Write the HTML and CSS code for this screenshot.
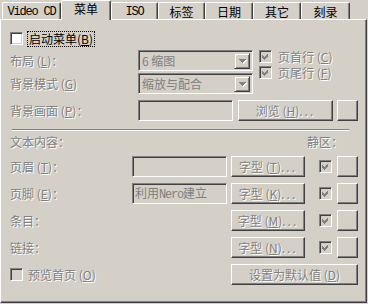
FILE: index.html
```html
<!DOCTYPE html>
<html lang="zh-CN">
<head>
    <meta charset="UTF-8">
    <title>菜单</title>
    <link rel="stylesheet" href="styles.css">
</head>
<body>
    <div class="dialog">
        <div class="tabs">
            <div class="tab tab-vcd"><span class="latin">Video CD</span></div>
            <div class="tab tab-active">菜单</div>
            <div class="tab"><span class="latin">ISO</span></div>
            <div class="tab">标签</div>
            <div class="tab tab-wide">日期</div>
            <div class="tab tab-wide">其它</div>
            <div class="tab tab-wider">刻录</div>
        </div>

        <div class="panel">
            <div class="row-enable">
                <span class="check check-on"></span>
                <span class="focus">启动菜单(<u>B</u>)</span>
            </div>

            <div class="layout">
                <span class="dis">布局 (<u>L</u>)：</span>
                <div class="select">
                    <span class="select-text dis-plain">6 缩图</span>
                    <span class="select-arrow"><svg width="7" height="4" viewBox="0 0 7 4" shape-rendering="crispEdges"><polygon points="0,0 7,0 3.5,4" fill="#808080"/></svg></span>
                </div>
                <div class="options">
                    <div class="opt">
                        <span class="check"><svg width="7" height="7" viewBox="0 0 7 7" shape-rendering="crispEdges"><polygon points="0,2 2,4 6,0 6,3 2,7 0,5" fill="#808080"/></svg></span>
                        <span class="dis opt-text">页首行 (<u>C</u>)</span>
                    </div>
                    <div class="opt">
                        <span class="check"><svg width="7" height="7" viewBox="0 0 7 7" shape-rendering="crispEdges"><polygon points="0,2 2,4 6,0 6,3 2,7 0,5" fill="#808080"/></svg></span>
                        <span class="dis opt-text">页尾行 (<u>F</u>)</span>
                    </div>
                </div>
                <span class="dis">背景模式 (<u>G</u>)</span>
                <div class="select">
                    <span class="select-text dis-plain">缩放与配合</span>
                    <span class="select-arrow"><svg width="7" height="4" viewBox="0 0 7 4" shape-rendering="crispEdges"><polygon points="0,0 7,0 3.5,4" fill="#808080"/></svg></span>
                </div>
            </div>

            <div class="row-bg">
                <span class="dis label-bg">背景画面 (<u>P</u>)：</span>
                <div class="textbox"></div>
                <div class="btn btn-browse"><span class="dis">浏览 (<u>H</u>)<span class="dots">...</span></span></div>
                <div class="btn btn-square"></div>
            </div>

            <div class="sep"></div>

            <div class="row-head">
                <span class="dis">文本内容：</span>
                <span class="dis quiet">静区：</span>
            </div>

            <div class="field-row">
                <span class="dis label-field">页眉 (<u>T</u>)：</span>
                <div class="textbox textbox-small"></div>
                <div class="btn btn-font"><span class="dis">字型 (<u>T</u>)<span class="dots">...</span></span></div>
                <span class="check row-check"><svg width="7" height="7" viewBox="0 0 7 7" shape-rendering="crispEdges"><polygon points="0,2 2,4 6,0 6,3 2,7 0,5" fill="#808080"/></svg></span>
                <div class="btn btn-square"></div>
            </div>

            <div class="field-row">
                <span class="dis label-field">页脚 (<u>E</u>)：</span>
                <div class="textbox textbox-small"><span class="dis-plain">利用<span class="latin">Nero</span>建立</span></div>
                <div class="btn btn-font"><span class="dis">字型 (<u>K</u>)<span class="dots">...</span></span></div>
                <span class="check row-check"><svg width="7" height="7" viewBox="0 0 7 7" shape-rendering="crispEdges"><polygon points="0,2 2,4 6,0 6,3 2,7 0,5" fill="#808080"/></svg></span>
                <div class="btn btn-square"></div>
            </div>

            <div class="field-row">
                <span class="dis label-field">条目：</span>
                <div class="blank"></div>
                <div class="btn btn-font"><span class="dis">字型 (<u>M</u>)<span class="dots">...</span></span></div>
                <span class="check row-check"><svg width="7" height="7" viewBox="0 0 7 7" shape-rendering="crispEdges"><polygon points="0,2 2,4 6,0 6,3 2,7 0,5" fill="#808080"/></svg></span>
                <div class="btn btn-square"></div>
            </div>

            <div class="field-row">
                <span class="dis label-field">链接：</span>
                <div class="blank"></div>
                <div class="btn btn-font"><span class="dis">字型 (<u>N</u>)<span class="dots">...</span></span></div>
                <span class="check row-check"><svg width="7" height="7" viewBox="0 0 7 7" shape-rendering="crispEdges"><polygon points="0,2 2,4 6,0 6,3 2,7 0,5" fill="#808080"/></svg></span>
                <div class="btn btn-square"></div>
            </div>

            <div class="field-row">
                <span class="check"></span>
                <span class="dis preview">预览首页 (<u>O</u>)</span>
                <div class="btn btn-default"><span class="dis">设置为默认值 (<u>D</u>)</span></div>
            </div>
        </div>
    </div>
</body>
</html>
```

FILE: styles.css
```css
body {
    margin: 0;
    background: #d4d0c8;
    font-family: "Noto Sans CJK SC", sans-serif;
    font-size: 12px;
    line-height: 14px;
    color: #000;
}

.dialog {
    width: 368px;
    height: 304px;
}

.latin {
    font-family: "Liberation Mono", monospace;
    letter-spacing: -1.2px;
}

u {
    text-decoration: underline;
}

.dots {
    letter-spacing: 2px;
}

/* onglets */
.tabs {
    display: flex;
    align-items: flex-end;
    height: 19px;
    padding-left: 2px;
}

.tab {
    box-sizing: border-box;
    width: 47px;
    height: 17px;
    display: flex;
    justify-content: center;
    align-items: center;
    padding-top: 1px;
    border-top: 1px solid #fff;
    border-left: 1px solid #fff;
    border-right: 1px solid #404040;
    border-radius: 2px 2px 0 0;
    box-shadow: inset -1px 0 #808080;
    white-space: nowrap;
}

.tab-vcd {
    width: 59px;
}

.tab-wide {
    width: 48px;
}

.tab-wider {
    width: 49px;
}

.tab-active {
    position: relative;
    z-index: 1;
    width: 50px;
    height: 20px;
    margin-bottom: -1px;
    padding-top: 0;
    padding-bottom: 4px;
    background: #d4d0c8;
}

/* panneau */
.panel {
    box-sizing: border-box;
    width: 367px;
    height: 284px;
    padding: 11px 8px 0 9px;
    border-top: 1px solid #fff;
    border-left: 1px solid #fff;
    border-right: 1px solid #404040;
    border-bottom: 1px solid #404040;
    box-shadow: inset -1px -1px #808080;
}

.dis {
    color: #808080;
    text-shadow: 1px 1px 0 #fff;
    white-space: nowrap;
}

.dis-plain {
    color: #808080;
    white-space: nowrap;
}

.check {
    box-sizing: border-box;
    flex: none;
    width: 13px;
    height: 13px;
    display: flex;
    justify-content: center;
    align-items: center;
    border: 1px solid;
    border-color: #808080 #fff #fff #808080;
    box-shadow: inset 1px 1px #404040, inset -1px -1px #d4d0c8;
}

.check-on {
    background: #fff;
}

.row-enable {
    display: flex;
    align-items: center;
    height: 15px;
}

.row-enable .check {
    margin-right: 4px;
}

.focus {
    padding: 0 1px;
    border: 1px dotted #000;
    white-space: nowrap;
}

.layout {
    display: grid;
    grid-template-columns: 128px 115px 1fr;
    grid-template-rows: 21px 21px;
    row-gap: 2px;
    align-items: center;
    margin-top: 4px;
}

.options {
    grid-row: 1 / span 2;
    grid-column: 3;
    align-self: start;
    padding-left: 6px;
}

.opt {
    display: flex;
    align-items: center;
    height: 13px;
    margin-bottom: 3px;
}

.opt .check {
    margin-right: 6px;
}

.opt-text {
    display: block;
    height: 13px;
    line-height: 13px;
    overflow: visible;
}

.select,
.textbox {
    box-sizing: border-box;
    height: 21px;
    display: flex;
    align-items: center;
    border: 1px solid;
    border-color: #808080 #fff #fff #808080;
    box-shadow: inset 1px 1px #404040, inset -1px -1px #d4d0c8;
    padding: 2px;
}

.select-text {
    flex: 1;
    padding-left: 1px;
}

.select-arrow {
    box-sizing: border-box;
    width: 16px;
    height: 16px;
    display: flex;
    justify-content: center;
    align-items: center;
    border: 1px solid;
    border-color: #d4d0c8 #404040 #404040 #d4d0c8;
    box-shadow: inset 1px 1px #fff, inset -1px -1px #808080;
}

.select-arrow svg {
    filter: drop-shadow(1px 1px 0 #fff);
}

.row-bg {
    display: flex;
    align-items: center;
    height: 21px;
    margin-top: 6px;
}

.label-bg {
    width: 128px;
}

.row-bg .textbox {
    width: 95px;
}

.btn {
    box-sizing: border-box;
    height: 21px;
    display: flex;
    justify-content: center;
    align-items: center;
    border: 1px solid;
    border-color: #fff #404040 #404040 #fff;
    box-shadow: inset -1px -1px #808080;
}

.btn-browse {
    width: 95px;
    margin-left: 5px;
}

.btn-square {
    width: 21px;
    margin-left: 4px;
}

.sep {
    width: 337px;
    height: 0;
    margin: 8px 0 0 2px;
    border-top: 1px solid #808080;
    border-bottom: 1px solid #fff;
}

.row-head {
    display: flex;
    align-items: center;
    height: 14px;
    margin-top: 4px;
}

.row-head .dis:first-child {
    flex: 1;
}

.quiet {
    width: 51px;
}

.field-row {
    display: flex;
    align-items: center;
    height: 21px;
    margin-top: 6px;
}

.row-head + .field-row {
    margin-top: 7px;
}

.label-field {
    width: 122px;
}

.textbox-small {
    width: 95px;
    padding-left: 2px;
}

.blank {
    width: 95px;
}

.btn-font {
    width: 74px;
    margin-left: 4px;
}

.row-check {
    margin-left: 14px;
}

.field-row .btn-square {
    margin-left: 5px;
}

.preview {
    margin-left: 5px;
}

.btn-default {
    width: 127px;
    margin-left: auto;
}
```
